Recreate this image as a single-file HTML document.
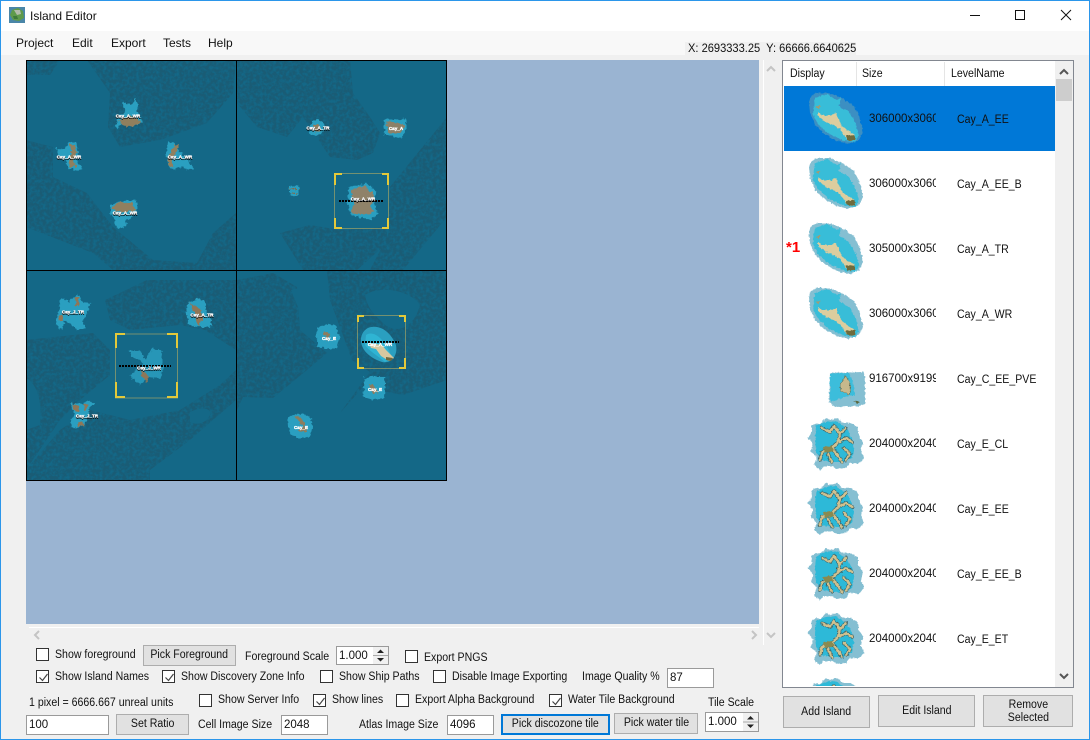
<!DOCTYPE html>
<html><head><meta charset="utf-8"><title>Island Editor</title>
<style>
html,body{margin:0;padding:0;background:#f0f0f0}
#w{position:relative;width:1090px;height:740px;overflow:hidden;background:#f0f0f0;font-family:"Liberation Sans",sans-serif;font-size:11.5px;color:#111}
.a{position:absolute}
.t{position:absolute;white-space:nowrap;line-height:14px;height:14px;transform:scaleX(.92);transform-origin:0 50%}
.n{transform:none}
.b{position:absolute;box-sizing:border-box;background:#e1e1e1;border:1px solid #adadad;text-align:center;display:flex;align-items:center;justify-content:center;line-height:13px}
.b span{display:block;white-space:nowrap;transform:scaleX(.92)}
.i{position:absolute;box-sizing:border-box;background:#fff;border:1px solid #9a9a9a;padding-left:2px;padding-top:1px;line-height:17px}
.c{position:absolute;box-sizing:border-box;width:13px;height:13px;background:#fff;border:1px solid #333}
.c svg{position:absolute;left:1px;top:1px}
</style></head><body><div id="w">
<div class="a" style="left:0;top:0;width:1090px;height:31px;background:#fff"></div>
<div class="a" style="left:0;top:31px;width:1090px;height:24px;background:#f8f8f8"></div>
<svg class="a" style="left:9px;top:7px" width="16" height="16" viewBox="0 0 16 16"><rect width="16" height="16" fill="#4a86a8"/><path d="M3 3L9 1L14 4L15 11L10 14L4 13L1 8Z" fill="#5f9a4a"/><path d="M5 3L11 3L12 7L8 8Z" fill="#b4bcaa"/><path d="M4 9L8 9L9 12L5 12Z" fill="#3f7a3a"/></svg>
<div class="t n" style="left:30px;top:9px;font-size:12px">Island Editor</div>
<svg class="a" style="left:960px;top:5px" width="120" height="20"><path d="M10 10.500H20" stroke="#111"/><rect x="55.500" y="5.500" width="9" height="9" fill="none" stroke="#111"/><path d="M101 5L111 15M111 5L101 15" stroke="#111" fill="none"/></svg>
<div class="t n" style="left:16px;top:36px;font-size:12px">Project</div>
<div class="t n" style="left:72px;top:36px;font-size:12px">Edit</div>
<div class="t n" style="left:111px;top:36px;font-size:12px">Export</div>
<div class="t n" style="left:163px;top:36px;font-size:12px">Tests</div>
<div class="t n" style="left:208px;top:36px;font-size:12px">Help</div>
<div class="a" style="left:685px;top:42px;width:171px;height:13px;background:#f0f0f0"></div>
<div class="t" style="left:688px;top:42px;transform:scaleX(.965)">X: 2693333.25&nbsp; Y: 66666.6640625</div>

<div class="a" style="left:26px;top:60px;width:733px;height:564px;background:#9ab4d2"></div>
<div class="a" style="left:29px;top:627px;width:730px;height:1px;background:#fff"></div>
<div class="a" style="left:763px;top:60px;width:1px;height:585px;background:#fff"></div>
<svg class="a" style="left:26px;top:628px" width="740" height="16"><path d="M13 3L9 7L13 11M726 3L730 7L726 11" fill="none" stroke="#c4c4c4" stroke-width="2"/></svg>
<svg class="a" style="left:764px;top:62px" width="16" height="580"><path d="M3 9L7 5L11 9M3 571L7 575L11 571" fill="none" stroke="#c4c4c4" stroke-width="2"/></svg>

<svg class="a" style="left:26px;top:60px" width="421" height="421" viewBox="26 60 421 421" shape-rendering="crispEdges">
<defs>
<filter id="tx" x="0" y="0" width="100%" height="100%" color-interpolation-filters="sRGB"><feTurbulence type="fractalNoise" baseFrequency="0.3" numOctaves="3" seed="4" result="n"/><feColorMatrix in="n" type="matrix" values="0 0 0 0 0.10  0 0 0 0 0.36  0 0 0 0 0.46  0 0 0 3 -0.85"/><feComposite in2="SourceAlpha" operator="in"/></filter>
<filter id="rg" x="0" y="0" width="100%" height="100%" color-interpolation-filters="sRGB"><feTurbulence type="fractalNoise" baseFrequency="0.3" numOctaves="2" seed="7" result="n"/><feDisplacementMap in="SourceGraphic" in2="n" scale="5" xChannelSelector="R" yChannelSelector="G"/></filter>
</defs>
<rect x="26" y="60" width="421" height="421" fill="#146887"/>
<g filter="url(#tx)" fill="#000" shape-rendering="auto">
<path d="M87 60L110 93L108 127L120 147L160 140L207 123L233 93L236 60Z"/>
<path d="M26 140L53 147L53 177L87 193L113 227L153 260L197 263L213 233L236 213L236 270L113 270L93 253L26 227Z"/>
<path d="M26 60L60 60L50 75L26 75Z"/>
<path d="M237 60L350 60L353 93L370 117L380 133L373 153L357 160L330 157L303 117L287 137L257 127L237 103Z"/>
<path d="M390 187L447 117L447 217L403 270L370 270L388 235Z"/>
<path d="M280 233L303 270L357 270L387 243L387 227L340 230L310 225Z"/>
<path d="M26 340L93 333L110 350L110 375L80 400L60 420L26 470Z"/>
<path d="M26 470L60 430L90 410L130 420L180 410L220 385L236 370L236 400L190 440L150 470L150 480L26 480Z"/>
<path d="M105 300L147 280L236 280L236 350L205 330L180 325L130 330L110 320Z"/>
<path d="M237 280L273 273L297 287L300 330L327 353L307 370L273 398L243 397L237 410Z"/>
<path d="M327 271L447 271L447 380L403 395L363 387L340 413L370 372L352 360L330 300Z"/>
</g>
<path d="M291 290C300 285 312 295 318 310L309 320L300 312Z" fill="#146887" shape-rendering="auto"/>
<path d="M365 295C380 285 410 290 420 305C415 325 400 335 385 325C375 315 368 310 365 295Z" fill="#146887" shape-rendering="auto"/>
<path d="M26 378C40 385 42 410 40 425L26 430Z" fill="#146887" shape-rendering="auto"/>
<path d="M190 412C205 405 212 410 210 415C205 425 195 425 190 422Z" fill="#146887" shape-rendering="auto"/>
<g shape-rendering="auto" filter="url(#rg)" transform="translate(-1.500 -1.500)">
<!-- cell 1 -->
<path d="M124 104L134 106L137 99L140 107L138 112L142 118L144 124L134 128L122 126L119 131L117 128L120 117L127 114Z" fill="#2a9fc0"/><path d="M120 122L130 118L140 120L143 124L134 128L124 127Z" fill="#907f5e"/>
<path d="M58 150L66 151L71 143L78 145L80 152L79 165L84 170L78 172L70 170L68 162L60 158Z" fill="#2a9fc0"/><path d="M71 146L76 146L79 154L75 161L78 168L72 168L70 162L73 155Z" fill="#907f5e"/>
<path d="M169 143L176 145L181 153L192 164L194 171L185 170L178 168L176 172L170 168L168 155Z" fill="#2a9fc0"/><path d="M176 146L181 146L177 155L173 162L176 168L170 167L169 160Z" fill="#907f5e"/>
<path d="M112 206L119 204L127 202L138 201L139 209L135 217L127 222L128 228L118 230L116 222L112 214Z" fill="#2a9fc0"/><path d="M113 210L122 203L134 205L137 212L122 214Z" fill="#907f5e"/>
<!-- cell 2 -->
<path d="M317 121C323 120 326 126 326 130C324 136 316 139 311 136C309 131 312 124 317 121Z" fill="#2a9fc0"/><path d="M315 127L320 125L322 132L317 134Z" fill="#8f7e5f"/>
<path d="M385 121L398 121L408 120L408 130L403 140L395 138L386 136Z" fill="#2a9fc0"/><path d="M388 123L399 124L406 127L402 135L390 135Z" fill="#8c8168"/>
<path d="M291 188L300 187L301 196L296 199L291 196Z" fill="#2a9fc0"/><path d="M291 190H301M291 195H300" stroke="#7d6c50" stroke-dasharray="2 1"/>
<path d="M350 189L368 185L378 193L375 204L380 215L372 221L353 217L349 205Z" fill="#2a9fc0"/><path d="M352 191L366 187L376 197L372 208L376 213L368 216L352 214L356 205Z" fill="#8f8269"/>
<!-- cell 3 -->
<path d="M62 300L70 303L76 298L80 296L84 304L92 305L88 315L84 324L88 330L80 332L74 327L66 322L62 332L57 325L60 313Z" fill="#2a9fc0"/><path d="M76 298L80 298L81 306L77 308ZM60 318L64 316L65 322L61 323Z" fill="#8f7657"/>
<path d="M189 305L200 300L207 303L208 315L215 327L205 329L199 328L190 326L188 312Z" fill="#2a9fc0"/><path d="M190 304L202 310L204 320L200 328L197 315Z" fill="#8f7657"/>
<path d="M131 352L142 352L146 360L155 350L163 352L165 372L162 380L150 378L142 386L131 378L139 370L145 365L133 358Z" fill="#2a9fc0" opacity=".85"/><path d="M142 372L150 378L149 384L143 378Z" fill="#8f7657"/>
<path d="M72 405L85 405L90 402L96 405L90 412L90 418L85 428L74 430L72 422L76 415Z" fill="#2a9fc0"/><path d="M74 405L80 408L82 414L76 412ZM84 405L90 406L86 412ZM78 425L84 423L86 428L80 428Z" fill="#8f7657"/>
<!-- cell 4 -->
<path d="M318 329L328 326L338 327L341 340L338 350L326 350L319 348Z" fill="#2a9fc0"/><path d="M325 333L332 335L329 343L326 337Z" fill="#8c7d5e"/>
<path d="M366 380L375 378L386 378L387 392L385 400L372 402L365 398Z" fill="#2a9fc0"/><path d="M370 385L376 388L380 395L374 395Z" fill="#8c7d5e"/>
<path d="M290 418L300 415L312 417L314 430L311 438L300 440L292 436L289 425Z" fill="#2a9fc0"/><path d="M296 418L304 420L308 430L306 434L298 432L305 428Z" fill="#8c7d5e"/>
</g>
<g shape-rendering="auto">
<path d="M371 327C383 325 392 335 396 345C398 355 392 364 382 362C370 358 360 350 361 338C362 332 366 328 371 327Z" fill="#2a9fc0"/><path d="M366 335C373 330 385 338 392 358L385 362C378 356 368 350 365 345Z" fill="#2fb4d3"/><path d="M369 343L376 344L382 345L386 350L394 358L389 361L381 356L376 349L371 348Z" fill="#d6c8a0"/><path d="M386 357L393 358L391 361L386 360Z" fill="#6f6940"/>
</g>
<!-- selection boxes -->
<g fill="none">
<rect x="334.500" y="173.500" width="54" height="55" stroke="#a8a866" stroke-opacity=".65"/>
<rect x="115.500" y="334" width="62" height="64" stroke="#a8a866" stroke-opacity=".65"/>
<rect x="357.500" y="315.500" width="48" height="53" stroke="#a8a866" stroke-opacity=".65"/>
<g stroke="#e3c93a" stroke-width="2">
<path d="M335 185V174H342M382 174H388V185M335 218V228H342M382 228H388V218"/>
<path d="M116 348V334H125M167 334H177V348M116 382V397H125M167 397H177V382"/>
<path d="M358 322V316H364M399 316H405V322M358 358V368H364M399 368H405V358"/>
</g></g>
<!-- black dashed lines -->
<g stroke="#000" stroke-width="2" stroke-dasharray="2 1">
<path d="M339 201H383"/><path d="M119 366H171"/><path d="M362 342H399"/>
</g>
<!-- labels -->
<g font-family="Liberation Sans,sans-serif" font-size="4.600" font-weight="bold" fill="#000" stroke="#000" stroke-width=".4" shape-rendering="auto" text-anchor="middle">
<text x="128" y="118.500">Cay_A_WR</text><text x="69" y="159.500">Cay_A_WR</text><text x="180" y="159.500">Cay_A_WR</text><text x="125" y="215.500">Cay_A_WR</text>
<text x="318" y="130.500">Cay_A_TR</text><text x="363" y="201.500">Cay_A_WR</text>
<text x="73" y="314.500">Cay_J_TR</text><text x="202" y="317.500">Cay_A_TR</text><text x="149" y="370.500">Cay_J_WR</text><text x="87" y="418.500">Cay_J_TR</text>
</g>
<g font-family="Liberation Sans,sans-serif" font-size="4.600" font-weight="bold" fill="#fff" stroke="#fff" stroke-width=".35" shape-rendering="auto" text-anchor="middle">
<text x="128" y="117.500">Cay_A_WR</text><text x="69" y="158.500">Cay_A_WR</text><text x="180" y="158.500">Cay_A_WR</text><text x="125" y="214.500">Cay_A_WR</text>
<text x="318" y="129.500">Cay_A_TR</text><text x="396" y="130">Cay_A</text><text x="363" y="200.500">Cay_A_WR</text>
<text x="73" y="313.500">Cay_J_TR</text><text x="202" y="316.500">Cay_A_TR</text><text x="149" y="369.500">Cay_J_WR</text><text x="87" y="417.500">Cay_J_TR</text>
<text x="329" y="340">Cay_E</text><text x="375" y="391">Cay_E</text><text x="301" y="429">Cay_E</text><text x="380" y="346">Cay_A_WR</text>
</g>
<path d="M26.500 60V481M236.500 60V481M446.500 60V481M26 60.500H447M26 270.500H447M26 480.500H447" stroke="#000" fill="none"/>
</svg>

<!-- list -->
<div class="a" style="left:782px;top:60px;width:292px;height:628px;box-sizing:border-box;border:1px solid #828790;background:#fff;overflow:hidden">
<div class="a" style="left:73px;top:1px;width:1px;height:24px;background:#e5e5e5"></div>
<div class="a" style="left:161px;top:1px;width:1px;height:24px;background:#e5e5e5"></div>
<div class="a" style="left:1px;top:25px;width:271px;height:65px;background:#0078d7"></div>
<div class="a" style="left:272px;top:0;width:18px;height:626px;background:#f0f0f0"></div>
<div class="a" style="left:273px;top:18px;width:16px;height:22px;background:#cdcdcd"></div>
</div>
<svg class="a" style="left:1055px;top:62px" width="18" height="625"><path d="M5 12L9 8L13 12M5 612L9 616L13 612" fill="none" stroke="#555" stroke-width="2"/></svg>
<div class="t" style="left:790px;top:67px">Display</div>
<div class="t" style="left:862px;top:67px">Size</div>
<div class="t" style="left:951px;top:67px">LevelName</div>

<svg class="a" style="left:783px;top:86px" width="272" height="600" viewBox="783 86 272 600">
<defs>
<filter id="fz" x="-10%" y="-10%" width="120%" height="120%" color-interpolation-filters="sRGB"><feTurbulence type="fractalNoise" baseFrequency="0.4" numOctaves="2" seed="3" result="n"/><feDisplacementMap in="SourceGraphic" in2="n" scale="3" xChannelSelector="R" yChannelSelector="G"/></filter>
<g id="tA"><path d="M2 4L8 1L20 1L33 6L45 14L51 26L54 40L50 48L40 52L28 49L14 41L6 33L1 21L0 10Z"/>
<path d="M6 6L18 2L28 8L32 6L30 14L40 20L47 32L50 44L46 50L36 49L20 42L9 32L4 22L5 12Z" fill="#38bdd8"/>
<path d="M9 20L13 23L23 23L27 21L29 26L33 34L39 39L46 43L46 48L41 49L37 46L31 37L24 33L17 30L9 24Z" fill="#dccd9e"/>
<path d="M37 44L46 43L46 48L41 49L38 48Z" fill="#6e6b3d"/><path d="M7 15L11 13L10 17Z" fill="#a99a6d"/></g>
<g id="tE"><path d="M3 10L8 7L12 8L18 2L22 4L30 2L34 7L42 7L50 11L50 18L55 26L53 34L56 42L50 48L42 47L38 52L28 53L24 50L16 50L12 54L6 49L9 42L3 36L5 28L0 22L4 16Z" fill="#85bfd2"/>
<path d="M8 10L18 6L28 5L38 12L44 22L46 32L44 42L36 46L24 46L14 44L8 36L7 24Z" fill="#2db9d8"/>
<g fill="none" stroke="#3c5a5c" stroke-width="3.600" stroke-linejoin="round" stroke-linecap="round"><path d="M14 12L22 16L26 10L32 18L30 26L24 32L14 36M30 26L38 22L44 26M24 32L30 40L34 46M14 36L12 44M32 18L38 12M36 32L42 38L38 44M20 38L24 46"/></g>
<g fill="none" stroke="#cfc190" stroke-width="2.400" stroke-linejoin="round" stroke-linecap="round"><path d="M14 12L22 16L26 10L32 18L30 26L24 32L14 36M30 26L38 22L44 26M24 32L30 40L34 46M14 36L12 44M32 18L38 12M36 32L42 38L38 44M20 38L24 46"/></g>
<path d="M15 31L24 30L26 35L17 37Z" fill="#8a8a50"/></g>
</defs>
<g filter="url(#fz)">
<use href="#tA" x="809" y="92" fill="#3c8fc2"/>
<use href="#tA" x="809" y="157" fill="#85bfd2"/>
<use href="#tA" x="809" y="222" fill="#85bfd2"/>
<use href="#tA" x="809" y="287" fill="#85bfd2"/>
<g transform="translate(829 372)"><path d="M1 1L34 0L36 4L36 32L30 34L6 35L0 30Z" fill="#85bfd2"/><path d="M1 2L20 1L24 10L26 24L18 24L8 28L1 30Z" fill="#3cbddb"/><path d="M16 4L20 9L22 19L20 23L12 19L11 14Z" fill="#c6b88c" stroke="#5b6850" stroke-width=".6"/><path d="M25 29L31 30L28 32Z" fill="#5b6840"/></g>
<use href="#tE" x="808" y="416"/>
<use href="#tE" x="808" y="481"/>
<use href="#tE" x="808" y="546"/>
<use href="#tE" x="808" y="611"/>
<use href="#tE" x="808" y="676"/>
</g>
</svg>

<div class="a" style="left:869px;top:87px;width:67px;height:599px;overflow:hidden">
<div class="t n" style="left:0;top:25px">306000x306000</div>
<div class="t n" style="left:0;top:90px">306000x306000</div>
<div class="t n" style="left:0;top:155px">305000x305000</div>
<div class="t n" style="left:0;top:220px">306000x306000</div>
<div class="t n" style="left:0;top:285px">916700x919900</div>
<div class="t n" style="left:0;top:350px">204000x204000</div>
<div class="t n" style="left:0;top:415px">204000x204000</div>
<div class="t n" style="left:0;top:480px">204000x204000</div>
<div class="t n" style="left:0;top:545px">204000x204000</div>
</div>
<div class="t" style="left:957px;top:112px;margin-top:1px">Cay_A_EE</div>
<div class="t" style="left:957px;top:177px;margin-top:1px">Cay_A_EE_B</div>
<div class="t" style="left:957px;top:242px;margin-top:1px">Cay_A_TR</div>
<div class="t" style="left:957px;top:307px;margin-top:1px">Cay_A_WR</div>
<div class="t" style="left:957px;top:372px;margin-top:1px">Cay_C_EE_PVE</div>
<div class="t" style="left:957px;top:437px;margin-top:1px">Cay_E_CL</div>
<div class="t" style="left:957px;top:502px;margin-top:1px">Cay_E_EE</div>
<div class="t" style="left:957px;top:567px;margin-top:1px">Cay_E_EE_B</div>
<div class="t" style="left:957px;top:632px;margin-top:1px">Cay_E_ET</div>
<div class="t n" style="left:786px;top:241px;color:#f00;font-size:15px;font-weight:bold">*1</div>

<div class="b" style="left:783px;top:696px;width:87px;height:32px;padding-top:1px"><span>Add Island</span></div>
<div class="b" style="left:878px;top:695px;width:97px;height:32px"><span>Edit Island</span></div>
<div class="b" style="left:983px;top:695px;width:90px;height:32px;padding-top:1px"><span>Remove<br>Selected</span></div>

<!-- controls -->
<div class="c" style="left:36px;top:648px"></div><div class="t" style="left:55px;top:648px">Show foreground</div>
<div class="b" style="left:143px;top:645px;width:93px;height:21px"><span>Pick Foreground</span></div>
<div class="t" style="left:245px;top:650px">Foreground Scale</div>
<div class="i" style="left:336px;top:646px;width:53px;height:19px">1.000</div>
<div class="c" style="left:405px;top:650px"></div><div class="t" style="left:424px;top:651px">Export PNGS</div>

<div class="c" style="left:36px;top:670px"><svg width="11" height="11"><path d="M1.500 5.500L4.500 8.500L9.500 2" fill="none" stroke="#444" stroke-width="1.200"/></svg></div><div class="t" style="left:55px;top:670px">Show Island Names</div>
<div class="c" style="left:162px;top:670px"><svg width="11" height="11"><path d="M1.500 5.500L4.500 8.500L9.500 2" fill="none" stroke="#444" stroke-width="1.200"/></svg></div><div class="t" style="left:181px;top:670px">Show Discovery Zone Info</div>
<div class="c" style="left:320px;top:670px"></div><div class="t" style="left:339px;top:670px">Show Ship Paths</div>
<div class="c" style="left:433px;top:670px"></div><div class="t" style="left:452px;top:670px">Disable Image Exporting</div>
<div class="t" style="left:582px;top:670px">Image Quality %</div>
<div class="i" style="left:667px;top:668px;width:47px;height:20px">87</div>

<div class="t" style="left:29px;top:696px">1 pixel = 6666.667 unreal units</div>
<div class="c" style="left:199px;top:694px"></div><div class="t" style="left:218px;top:693px">Show Server Info</div>
<div class="c" style="left:313px;top:694px"><svg width="11" height="11"><path d="M1.500 5.500L4.500 8.500L9.500 2" fill="none" stroke="#444" stroke-width="1.200"/></svg></div><div class="t" style="left:332px;top:693px">Show lines</div>
<div class="c" style="left:396px;top:694px"></div><div class="t" style="left:415px;top:693px">Export Alpha Background</div>
<div class="c" style="left:549px;top:694px"><svg width="11" height="11"><path d="M1.500 5.500L4.500 8.500L9.500 2" fill="none" stroke="#444" stroke-width="1.200"/></svg></div><div class="t" style="left:568px;top:693px">Water Tile Background</div>
<div class="t" style="left:708px;top:696px">Tile Scale</div>

<div class="i" style="left:26px;top:715px;width:83px;height:20px">100</div>
<div class="b" style="left:116px;top:714px;width:73px;height:21px"><span>Set Ratio</span></div>
<div class="t" style="left:198px;top:718px">Cell Image Size</div>
<div class="i" style="left:281px;top:715px;width:47px;height:20px">2048</div>
<div class="t" style="left:359px;top:718px">Atlas Image Size</div>
<div class="i" style="left:447px;top:715px;width:47px;height:20px">4096</div>
<div class="b" style="left:501px;top:714px;width:109px;height:21px;border:2px solid #0078d7"><span>Pick discozone tile</span></div>
<div class="b" style="left:614px;top:713px;width:84px;height:21px"><span>Pick water tile</span></div>
<div class="i" style="left:705px;top:712px;width:54px;height:20px">1.000</div>

<svg class="a" style="left:373px;top:647px" width="15" height="17"><rect x="0" y="0" width="15" height="17" fill="#f0f0f0"/><path d="M0 8.500H15" stroke="#aaa"/><path d="M4 6L7.500 2.500L11 6ZM4 11L7.500 14.500L11 11Z" fill="#222"/></svg>
<svg class="a" style="left:743px;top:713px" width="15" height="18"><rect width="15" height="18" fill="#f0f0f0"/><path d="M0 9H15" stroke="#aaa"/><path d="M4 6.500L7.500 3L11 6.500ZM4 11.500L7.500 15L11 11.500Z" fill="#222"/></svg>

<div class="a" style="left:0;top:0;width:1090px;height:1px;background:#2b96ea"></div>
<div class="a" style="left:0;top:739px;width:1090px;height:1px;background:#2b96ea"></div>
<div class="a" style="left:0;top:0;width:1px;height:740px;background:#2b96ea"></div>
<div class="a" style="left:1089px;top:0;width:1px;height:740px;background:#2b96ea"></div>
</div></body></html>
